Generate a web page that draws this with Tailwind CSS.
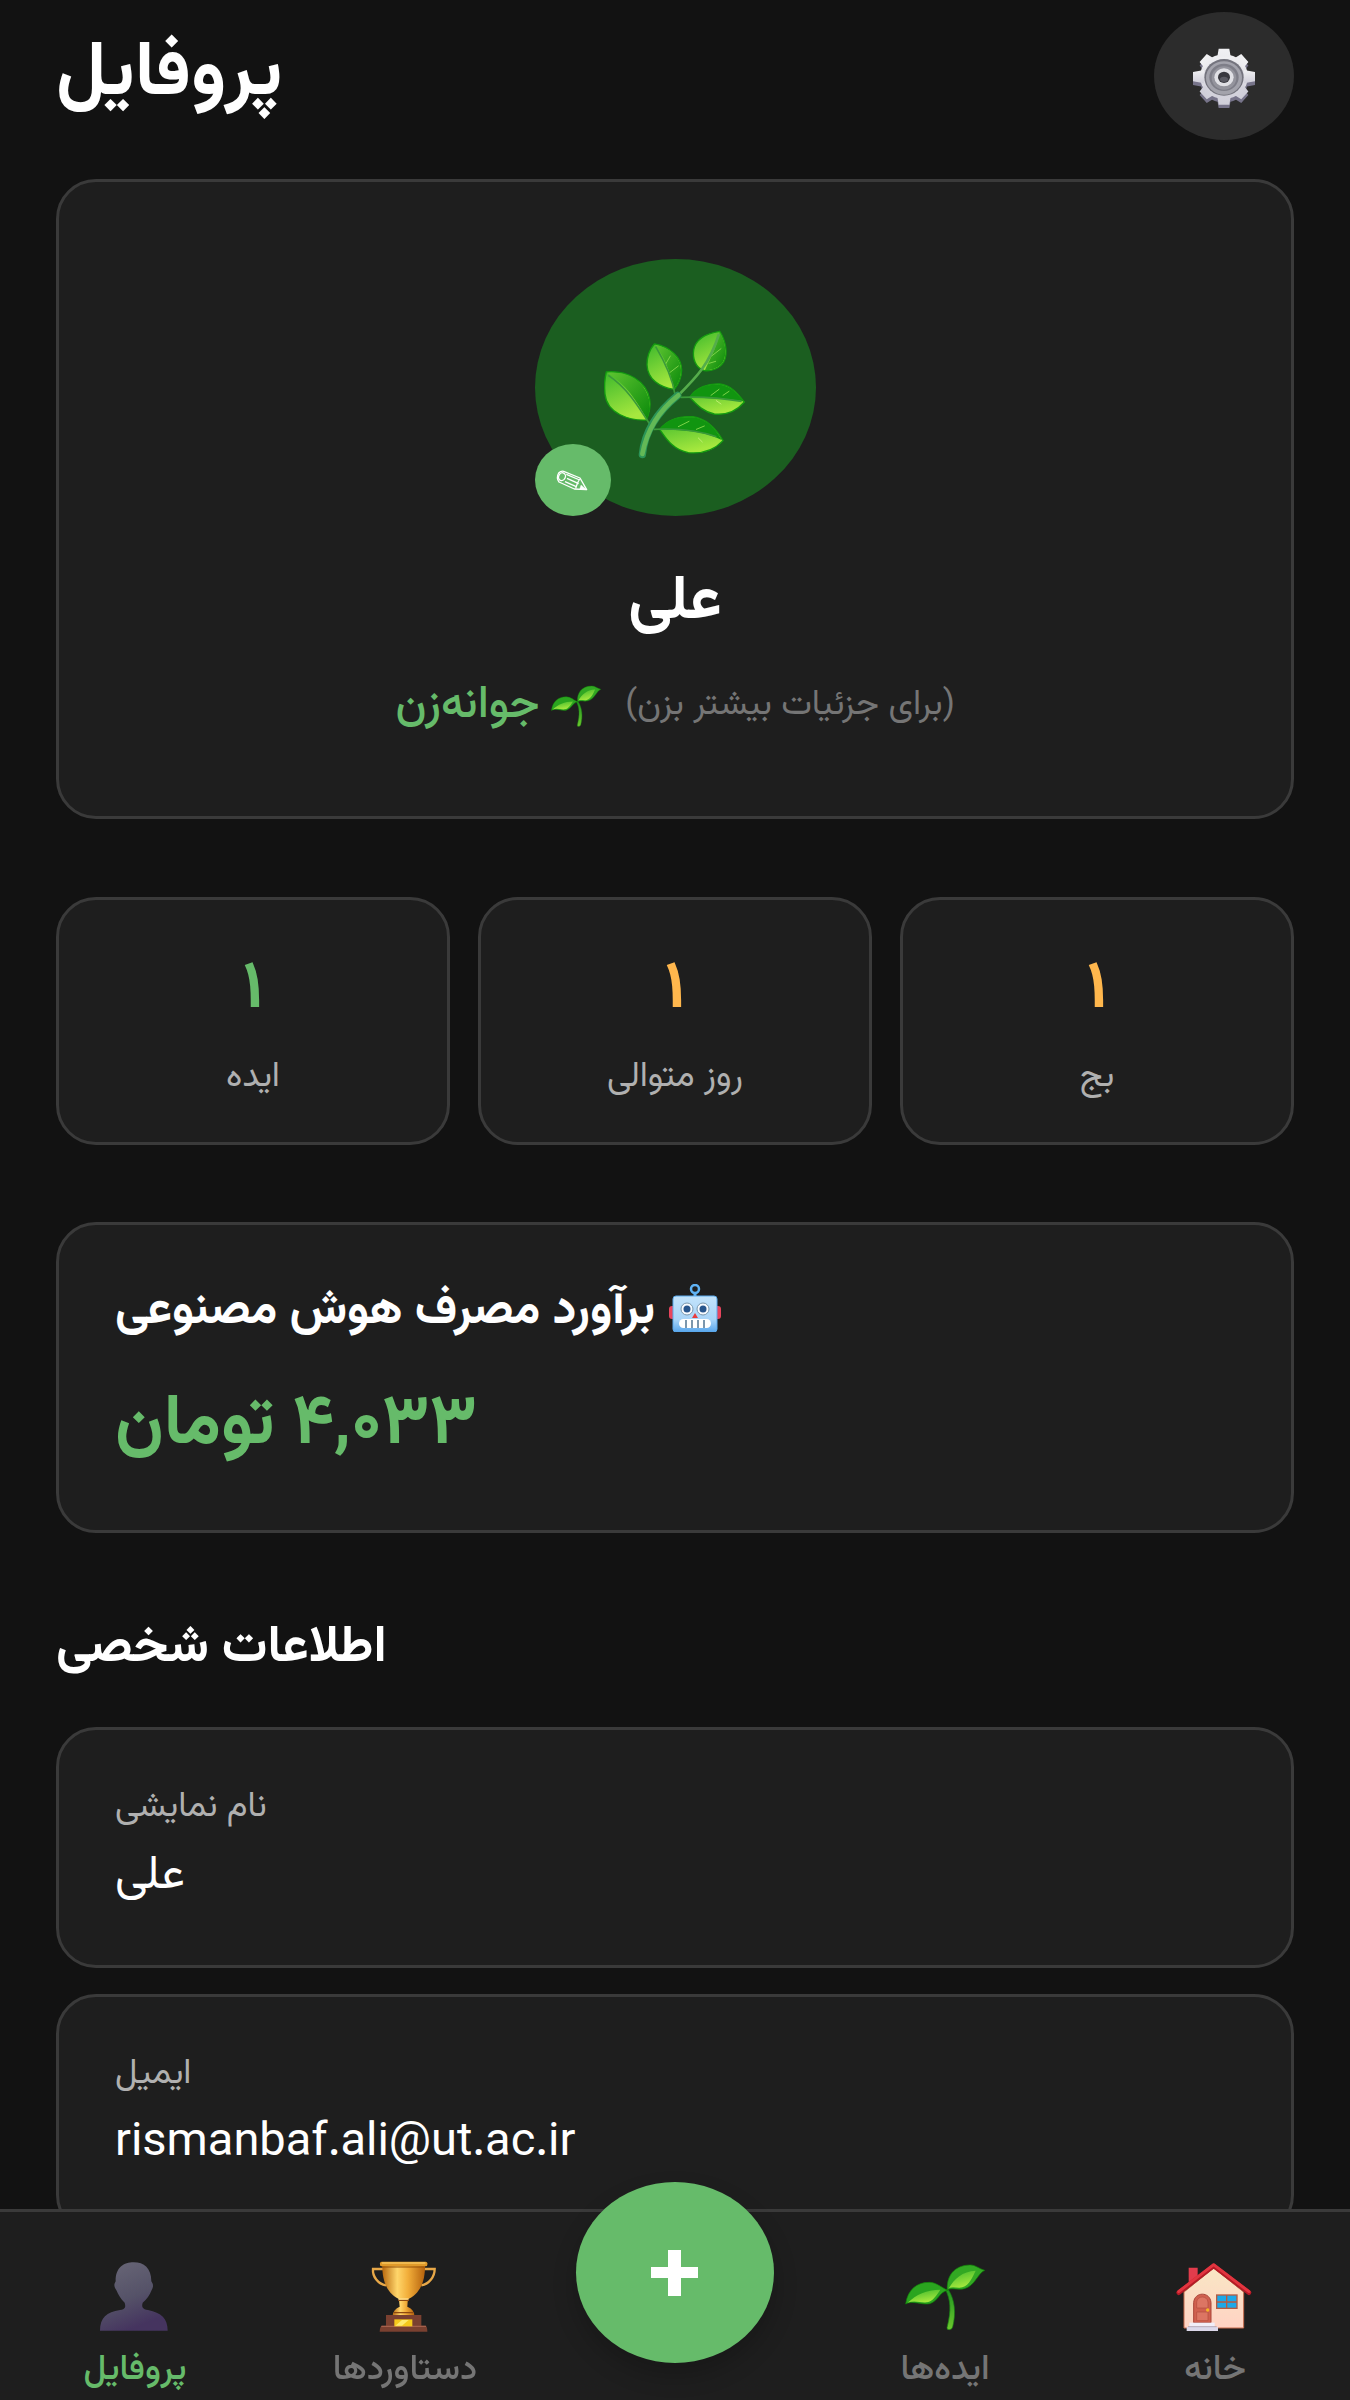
<!DOCTYPE html>
<html lang="fa">
<head>
<meta charset="utf-8">
<meta name="viewport" content="width=device-width, initial-scale=1">
<title>پروفایل</title>
<script src="https://cdn.jsdelivr.net/npm/@tailwindcss/browser@4"></script>
</head>
<body class="min-h-screen bg-[#121212] text-white font-['Vazirmatn','Noto_Sans_Arabic','Noto_Sans',sans-serif]">

<!-- Shared gradients and the sprout symbol -->
<svg class="absolute size-0" aria-hidden="true">
  <defs>
    <linearGradient id="leafLight" x1="0" y1="0" x2="0.4" y2="1"><stop offset="0" stop-color="#3cb82c"/><stop offset="1" stop-color="#a6e83e"/></linearGradient>
    <linearGradient id="leafDark" x1="0" y1="0" x2="1" y2="1"><stop offset="0" stop-color="#5fc531"/><stop offset="1" stop-color="#0b8a0b"/></linearGradient>
    <linearGradient id="stem" x1="0" y1="0" x2="0" y2="1"><stop offset="0" stop-color="#1f9420"/><stop offset="1" stop-color="#6cc82e"/></linearGradient>
    <linearGradient id="gearFace" x1="0" y1="0" x2="0" y2="1"><stop offset="0" stop-color="#f1f1f3"/><stop offset="1" stop-color="#cfced9"/></linearGradient>
    <linearGradient id="person" x1="0" y1="0" x2="0.4" y2="1"><stop offset="0" stop-color="#6a6878"/><stop offset="0.6" stop-color="#555268"/><stop offset="1" stop-color="#45345f"/></linearGradient>
    <linearGradient id="gold" x1="0" y1="0" x2="1" y2="0"><stop offset="0" stop-color="#b9690f"/><stop offset="0.35" stop-color="#ffd66b"/><stop offset="0.6" stop-color="#f2ae3a"/><stop offset="1" stop-color="#b5620d"/></linearGradient>
    <linearGradient id="wall" x1="0" y1="0" x2="0" y2="1"><stop offset="0" stop-color="#f9e6c4"/><stop offset="1" stop-color="#ffd3c4"/></linearGradient>
    <linearGradient id="robotHead" x1="0" y1="0" x2="0" y2="1"><stop offset="0" stop-color="#c3e3fb"/><stop offset="0.65" stop-color="#a9d5f8"/><stop offset="1" stop-color="#58a6ec"/></linearGradient>
    <symbol id="sprout" viewBox="132 129 240 200">
      <path d="M254 208C268 236 272 268 258 321Q257 327 265 327Q273 327 275 319C286 276 281 236 262 207Z" fill="url(#stem)" stroke="#157d12" stroke-width="2"/>
      <path d="M134 250C140 207 168 184 206 185C228 186 240 200 260 209C234 214 232 242 206 249C184 254 154 238 134 250Z" fill="#2aa51f" stroke="#108408" stroke-width="2"/>
      <path d="M140 246C166 222 196 207 238 207C226 224 216 242 198 245C180 247 160 238 140 246Z" fill="url(#leafLight)"/>
      <path d="M259 208C256 166 280 134 326 133C342 132 352 143 371 149C350 158 342 196 310 204C290 209 272 200 259 208Z" fill="#32a823" stroke="#108408" stroke-width="2"/>
      <path d="M264 202C280 174 304 152 344 150C334 170 326 192 304 200C290 203 276 197 264 202Z" fill="url(#leafLight)"/>
    </symbol>
  </defs>
</svg>

<main class="px-14 pt-3 pb-40">
  <header class="flex h-32 items-center justify-between">
    <h1 dir="rtl" class="text-[76px] leading-[112px] font-bold">پروفایل</h1>
    <button type="button" aria-label="تنظیمات" class="flex h-32 w-[140px] items-center justify-center rounded-[50%] bg-[#2c2c2c]">
      <svg class="size-16" viewBox="-96 -100 192 192" aria-hidden="true">
        <defs>
          <g id="teeth">
            <ellipse rx="72" ry="67"/>
            <path id="tooth" d="M-20 -60L-16 -84H16L20 -60ZM-20 60L-16 84H16L20 60Z"/>
            <path d="M-60 -20L-93 -14V14L-60 20ZM60 -20L93 -14V14L60 20Z"/>
            <use href="#tooth" transform="rotate(48)"/><use href="#tooth" transform="rotate(-48)"/>
          </g>
        </defs>
        <use href="#teeth" y="9" fill="#77748a"/>
        <use href="#teeth" y="-2" fill="url(#gearFace)"/>
        <ellipse rx="59" ry="55" fill="#74747e"/>
        <ellipse cy="2" rx="54" ry="50" fill="#a3a3ac"/>
        <ellipse rx="44" ry="41" fill="#7e7e88"/>
        <ellipse cy="2" rx="37" ry="35" fill="#94949d"/>
        <ellipse rx="29" ry="27" fill="#e0e0e5"/>
        <ellipse rx="18" ry="17" fill="#38383f"/>
        <ellipse cy="6" rx="12" ry="8" fill="#5a5a63"/>
      </svg>
    </button>
  </header>

  <section class="mt-[39px] flex flex-col items-center rounded-[40px] border-3 border-[#3a3a3a] bg-[#1e1e1e] pt-[77px] pb-[75px]">
    <div class="relative flex h-[257px] w-[281px] items-center justify-center rounded-[50%] bg-[#1b5e20]">
      <svg class="size-[150px]" viewBox="241 217 450 450" aria-hidden="true">
        <path d="M260 394C320 388 380 420 390 476C394 500 388 520 380 538C330 540 262 520 256 460C253 430 256 410 260 394Z" fill="url(#leafLight)" stroke="#149c10" stroke-width="4"/>
        <path d="M262 396C330 390 376 424 388 476C392 500 388 520 382 536C350 480 320 430 262 396Z" fill="url(#leafDark)"/>
        <path d="M404 310C450 318 486 350 486 388C486 412 476 430 464 446C420 440 384 416 382 372C382 344 392 324 404 310Z" fill="url(#leafLight)" stroke="#149c10" stroke-width="4"/>
        <path d="M406 312C450 320 484 350 484 388C484 412 474 430 464 444C450 392 434 346 406 312Z" fill="url(#leafDark)"/>
        <path d="M600 272C618 300 626 340 612 364C600 384 574 392 554 390C528 382 518 354 522 328C528 292 564 278 600 272Z" fill="url(#leafLight)" stroke="#149c10" stroke-width="4"/>
        <path d="M600 274C616 300 624 340 610 364C598 382 574 390 556 388C574 350 592 316 600 274Z" fill="url(#leafDark)"/>
        <path d="M510 470C530 440 566 428 600 430C636 434 656 462 674 484C650 512 620 524 584 520C550 514 530 490 510 470Z" fill="url(#leafLight)" stroke="#149c10" stroke-width="4"/>
        <path d="M510 470C530 440 566 430 600 432C636 436 654 462 672 482C620 472 560 474 510 470Z" fill="#119510"/>
        <path d="M420 566C446 534 480 526 520 528C564 534 590 566 610 600C584 628 550 640 506 636C460 628 440 594 420 566Z" fill="url(#leafLight)" stroke="#149c10" stroke-width="4"/>
        <path d="M420 566C446 534 480 528 520 530C564 536 588 566 606 598C550 568 480 570 420 566Z" fill="#119510"/>
        <g fill="none" stroke="#7ed348" stroke-width="3" stroke-linecap="round">
          <path d="M438 370L452 346M450 396L476 376M576 346L604 324M568 368L588 362M574 464L598 446M610 464L628 452M476 558L508 542M530 566L554 556"/>
          <path d="M536 592L548 604M590 480L604 490" stroke="#c0ef70"/>
        </g>
        <path d="M266 404C320 440 352 490 390 550M408 318C438 368 458 410 466 462M482 470Q570 466 666 482M402 566Q510 560 590 588" fill="none" stroke="#3b9a3a" stroke-width="5"/>
        <path d="M598 280C570 370 530 410 474 466" fill="none" stroke="#55ad4b" stroke-width="8"/>
        <path d="M474 464C430 500 376 560 368 642" fill="none" stroke="#2b9457" stroke-width="22" stroke-linecap="round"/>
        <path d="M476 464C430 500 384 556 368 640" fill="none" stroke="#63b956" stroke-width="14" stroke-linecap="round"/>
      </svg>
      <button type="button" aria-label="ویرایش" class="absolute bottom-0 left-0 flex h-[72px] w-[76px] items-center justify-center rounded-[50%] bg-[#66bb6a]">
        <svg class="size-9" viewBox="106 669 108 108" fill="none" stroke="#fff" stroke-width="4" stroke-linejoin="round" aria-hidden="true">
          <path d="M132 697L181 717L201 752L164 750L118 729Q109 716 117 702Q124 695 132 697Z"/>
          <ellipse cx="127" cy="713" rx="10" ry="12" transform="rotate(25 127 713)"/>
          <path d="M140 706L180 723M142 718L177 734M136 728L168 742M180 720Q172 732 168 748"/>
          <path d="M184 738L201 752L180 751Z" fill="#fff" stroke-width="1"/>
        </svg>
      </button>
    </div>
    <h2 dir="rtl" class="mt-[42px] text-[62px] leading-[90px] font-bold">علی</h2>
    <button type="button" dir="rtl" class="mt-[23px] flex h-[70px] items-center gap-6">
      <span class="text-[35px] leading-[70px] text-[#757575]">(برای جزئیات بیشتر بزن)</span>
      <span class="flex items-center gap-3 text-[45px] leading-[70px] font-medium text-[#66bb6a]"><svg class="h-[42px] w-[50px]" aria-hidden="true"><use href="#sprout"/></svg>جوانه‌زن</span>
    </button>
  </section>

  <section class="mt-[78px] grid grid-cols-3 gap-7 text-center">
    <div class="rounded-[40px] border-3 border-[#3a3a3a] bg-[#1e1e1e] pt-[41px] pb-9">
      <p class="text-[67px] leading-[100px] font-bold text-[#66bb6a]">۱</p>
      <p dir="rtl" class="mt-[9px] text-[35px] leading-14 text-[#b0b0b0]">ایده</p>
    </div>
    <div class="rounded-[40px] border-3 border-[#3a3a3a] bg-[#1e1e1e] pt-[41px] pb-9">
      <p class="text-[67px] leading-[100px] font-bold text-[#ffb74d]">۱</p>
      <p dir="rtl" class="mt-[9px] text-[35px] leading-14 text-[#b0b0b0]">روز متوالی</p>
    </div>
    <div class="rounded-[40px] border-3 border-[#3a3a3a] bg-[#1e1e1e] pt-[41px] pb-9">
      <p class="text-[67px] leading-[100px] font-bold text-[#ffb74d]">۱</p>
      <p dir="rtl" class="mt-[9px] text-[35px] leading-14 text-[#b0b0b0]">بج</p>
    </div>
  </section>

  <section class="mt-[77px] flex flex-col items-start rounded-[40px] border-3 border-[#3a3a3a] bg-[#1e1e1e] px-14 pt-[51px] pb-[54px]">
    <h2 dir="rtl" class="flex items-start gap-[14px] text-[48px] leading-[72px] font-bold">
      <svg class="mt-2 h-12 w-[52px]" viewBox="0 0 52 48" aria-hidden="true">
        <circle cx="26" cy="5" r="4" fill="none" stroke="#5fb2f3" stroke-width="2.5"/>
        <path d="M26 9V13" stroke="#5fb2f3" stroke-width="3"/>
        <rect y="22" width="7" height="13" rx="3" fill="#e8455d"/><rect x="45" y="22" width="7" height="13" rx="3" fill="#e8455d"/>
        <rect x="4" y="12" width="44" height="36" rx="3" fill="url(#robotHead)" stroke="#5aa9ec"/>
        <circle cx="18" cy="25" r="6" fill="#f7fbff" stroke="#7b98ad"/><circle cx="34" cy="25" r="6" fill="#f7fbff" stroke="#7b98ad"/>
        <circle cx="18" cy="25" r="3.5" fill="#28568d"/><circle cx="34" cy="25" r="3.5" fill="#28568d"/>
        <path d="M26 29L29 34H23Z" fill="#e83d3d"/>
        <rect x="10" y="35" width="32" height="9" rx="4.5" fill="#fff"/>
        <path d="M17 36V44M23 36V44M29 36V44M35 36V44" stroke="#7c97ad" stroke-width="2"/>
      </svg>
      برآورد مصرف هوش مصنوعی
    </h2>
    <p dir="rtl" class="mt-7 text-[70px] leading-[100px] font-bold text-[#66bb6a]">۴,۰۳۳ تومان</p>
  </section>

  <section class="mt-[78px] flex flex-col">
    <h2 dir="rtl" class="text-left text-[51px] leading-[76px] font-bold">اطلاعات شخصی</h2>
    <dl class="mt-10 flex flex-col gap-[26px]">
      <div class="rounded-[40px] border-3 border-[#3a3a3a] bg-[#1e1e1e] px-14 pt-[50px] pb-[54px]">
        <dt dir="rtl" class="text-left text-[35px] leading-14 text-[#b0b0b0]">نام نمایشی</dt>
        <dd dir="rtl" class="mt-[7px] text-left text-[47px] leading-[68px]">علی</dd>
      </div>
      <div class="rounded-[40px] border-3 border-[#3a3a3a] bg-[#1e1e1e] px-14 pt-[50px] pb-[54px]">
        <dt dir="rtl" class="text-left text-[35px] leading-14 text-[#b0b0b0]">ایمیل</dt>
        <dd class="mt-[7px] text-[47px] leading-[68px]">rismanbaf.ali@ut.ac.ir</dd>
      </div>
    </dl>
  </section>
</main>

<nav class="fixed inset-x-0 bottom-0 grid grid-cols-5 border-t-3 border-[#3a3a3a] bg-[#1e1e1e] pb-px text-[35px] leading-14 text-[#757575]">
  <a href="#profile" aria-current="page" class="flex flex-col items-center gap-1.5 pt-[45px] font-medium text-[#66bb6a]">
    <svg class="size-20" viewBox="285 231 240 240" aria-hidden="true"><path d="M300 452C300 414 320 396 360 390C376 387 378 382 374 368C362 356 354 342 350 332Q338 318 347 304C346 262 372 247 401 247C432 247 454 264 454 304Q464 318 454 332C450 344 440 358 428 368C424 382 428 387 444 390C484 398 503 416 503 452Z" fill="url(#person)"/></svg>
    <span dir="rtl">پروفایل</span>
  </a>
  <a href="#achievements" class="flex flex-col items-center gap-1.5 pt-[45px] font-medium">
    <svg class="size-20" viewBox="1095 231 240 240" aria-hidden="true">
      <path d="M1150 267H1119C1117 290 1134 312 1158 316M1271 267H1304C1304 290 1288 312 1264 316" fill="none" stroke="#e8a848" stroke-width="7"/>
      <path d="M1196 352H1224L1222 380Q1242 388 1243 406H1178Q1180 388 1199 380Z" fill="url(#gold)"/>
      <path d="M1147 256H1275C1276 310 1256 350 1211 362C1166 350 1146 310 1147 256Z" fill="url(#gold)"/>
      <rect x="1140" y="245" width="142" height="14" rx="5" fill="#e09a2a"/><path d="M1146 249H1276" stroke="#ffd874" stroke-width="3"/><path d="M1148 261H1274" stroke="#955009" stroke-width="3"/>
      <path d="M1194 361H1227M1182 398H1240" stroke="#8d4810" stroke-width="4"/><path d="M1195 357H1226" stroke="#ffdf90" stroke-width="4"/>
      <path d="M1158 405H1264V437H1276Q1282 438 1282 455H1139Q1140 438 1146 437H1158Z" fill="#7a4030"/>
      <path d="M1144 439H1278" stroke="#a5614c" stroke-width="4"/>
      <rect x="1183" y="418" width="54" height="21" fill="#f5c81c"/><path d="M1186 437L1206 420H1226L1206 437Z" fill="#ffe96b"/>
    </svg>
    <span dir="rtl">دستاوردها</span>
  </a>
  <div class="flex justify-center">
    <button type="button" aria-label="افزودن" class="-mt-[30px] flex h-[181px] w-[198px] items-center justify-center rounded-[50%] bg-[#66bb6a] shadow-[0_12px_24px_rgba(0,0,0,0.2)]">
      <svg class="size-12" viewBox="0 0 48 48" aria-hidden="true"><path d="M17 1H30V18H47V29H30V47H17V29H0V18H17Z" fill="#fff"/></svg>
    </button>
  </div>
  <a href="#ideas" class="flex flex-col items-center gap-1.5 pt-[45px] font-medium">
    <svg class="size-20" aria-hidden="true"><use href="#sprout"/></svg>
    <span dir="rtl">ایده‌ها</span>
  </a>
  <a href="#home" class="flex flex-col items-center gap-1.5 pt-[45px] font-medium">
    <svg class="size-20" viewBox="945 111 240 240" aria-hidden="true">
      <path d="M986 143H1013V170L986 192Z" fill="#e23c4c"/>
      <path d="M972 216L1061 144L1151 216V324H972Z" fill="url(#wall)" stroke="#c66b4c" stroke-width="3"/>
      <path d="M956 218L1061 138L1167 218" fill="none" stroke="#b51a26" stroke-width="14" stroke-linecap="round" stroke-linejoin="round"/>
      <path d="M956 215L1061 134L1167 215" fill="none" stroke="#e2353f" stroke-width="9" stroke-linecap="round" stroke-linejoin="round"/>
      <path d="M1001 308V248C1003 214 1051 214 1053 248V308Z" fill="#d0604f" stroke="#a94438" stroke-width="3"/>
      <path d="M1010 264V246C1012 226 1042 226 1044 246V264ZM1010 276H1044V302H1010Z" fill="#dc7563" stroke="#b34c3e" stroke-width="2"/>
      <circle cx="1043" cy="270" r="5" fill="#f5b625"/>
      <rect x="1070" y="225" width="61" height="40" fill="#1da8e8" stroke="#b55b42" stroke-width="4"/><path d="M1100 225V265M1070 246H1131" stroke="#b55b42" stroke-width="4"/>
      <rect x="988" y="308" width="76" height="12" fill="#f1eef8"/><rect x="980" y="321" width="94" height="12" fill="#dcd8ea"/><path d="M984 320H1070" stroke="#9690a8" stroke-width="2"/>
    </svg>
    <span dir="rtl">خانه</span>
  </a>
</nav>
</body>
</html>
